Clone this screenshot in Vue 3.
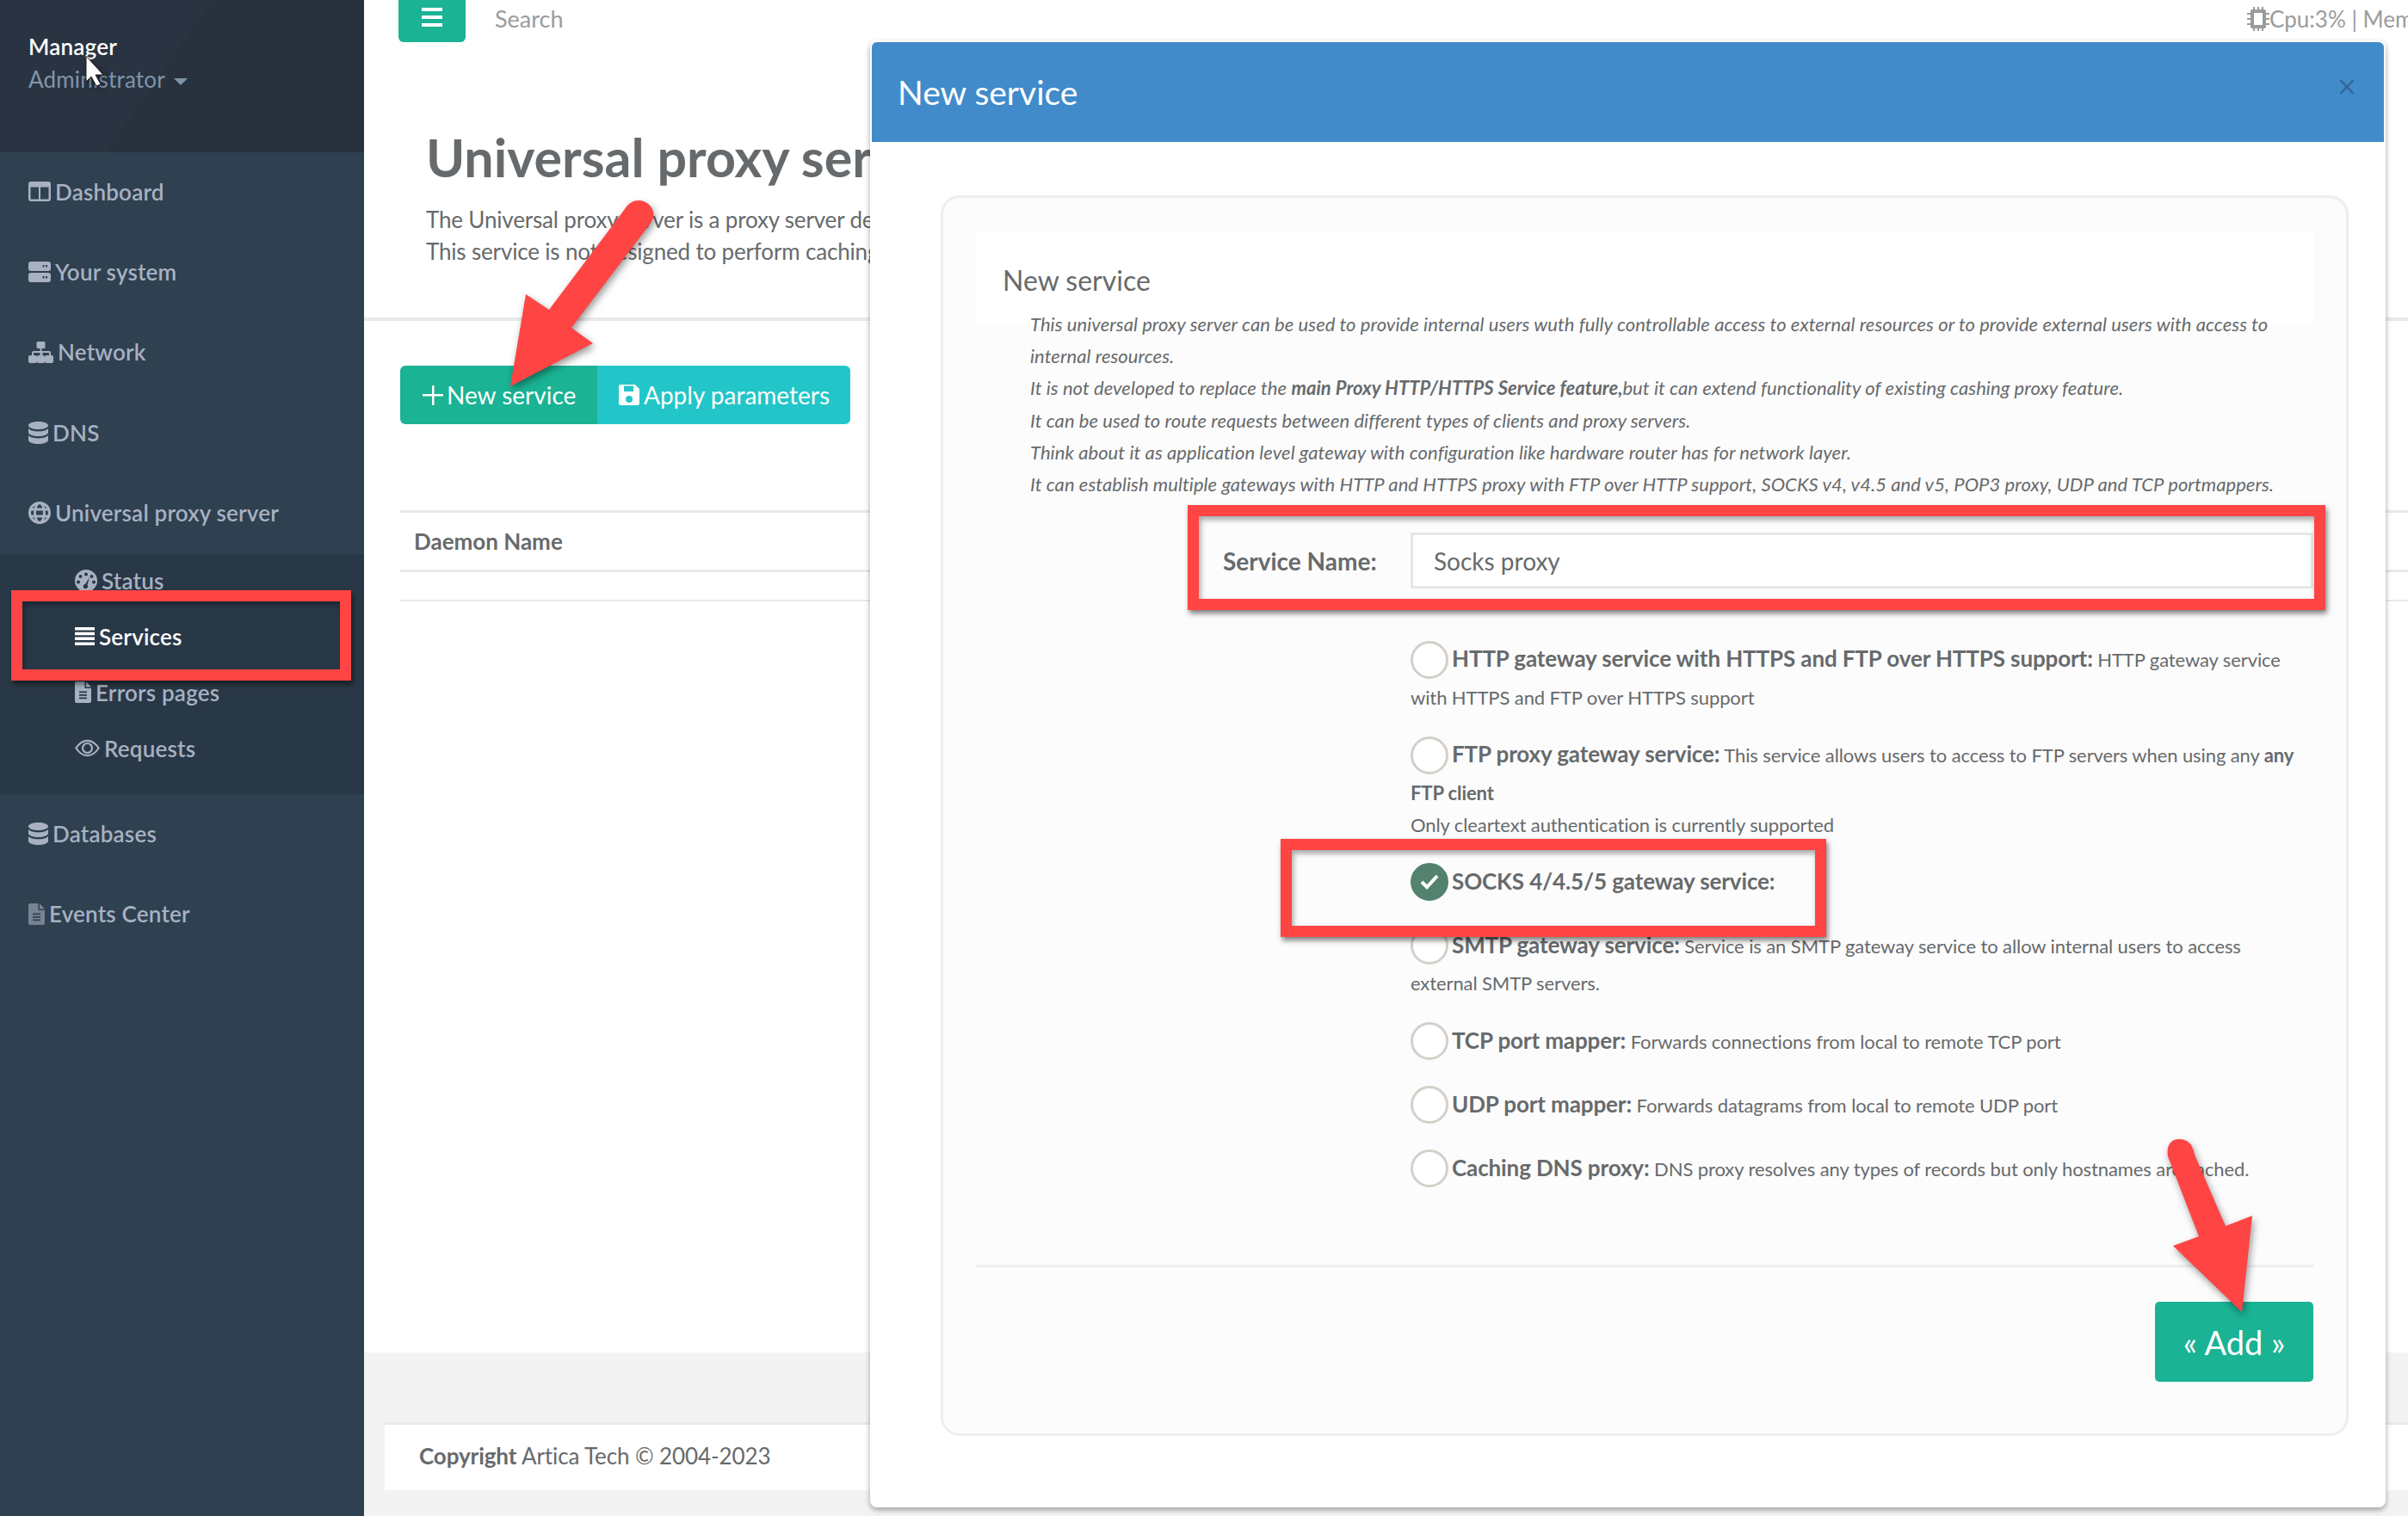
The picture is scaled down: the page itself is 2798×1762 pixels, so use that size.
<script setup>
const ICONS = {
  columns: { w: 26, h: 23, body: '<path fill-rule="evenodd" d="M3 0h20a3 3 0 0 1 3 3v17a3 3 0 0 1-3 3H3a3 3 0 0 1-3-3V3a3 3 0 0 1 3-3zM2.5 6.5v14h9.5v-14zM14 6.5v14h9.5v-14z"/>' },
  server: { w: 26, h: 24, body: '<path fill-rule="evenodd" d="M3 0h20a3 3 0 0 1 3 3v5a3 3 0 0 1-3 3H3a3 3 0 0 1-3-3V3a3 3 0 0 1 3-3zM20 4v2.500h2V4zM16.500 4v2.500h2V4zM3 13h20a3 3 0 0 1 3 3v5a3 3 0 0 1-3 3H3a3 3 0 0 1-3-3v-5a3 3 0 0 1 3-3zM20 17v2.500h2V17zM16.500 17v2.500h2V17z"/>' },
  sitemap: { w: 29, h: 25, body: '<path d="M11 0h7a1.500 1.500 0 0 1 1.500 1.500v5A1.500 1.500 0 0 1 18 8h-2.500v3H24a2 2 0 0 1 2 2v3h1a2 2 0 0 1 2 2v5a2 2 0 0 1-2 2h-6a2 2 0 0 1-2-2v-5a2 2 0 0 1 2-2h3v-3h-7.500v3H17a2 2 0 0 1 2 2v5a2 2 0 0 1-2 2h-5a2 2 0 0 1-2-2v-5a2 2 0 0 1 2-2h1.500v-3H6v3h2a2 2 0 0 1 2 2v5a2 2 0 0 1-2 2H2a2 2 0 0 1-2-2v-5a2 2 0 0 1 2-2h2v-3a2 2 0 0 1 2-2h7.500V8H11a1.500 1.500 0 0 1-1.500-1.500v-5A1.500 1.500 0 0 1 11 0z"/>' },
  database: { w: 23, h: 26, body: '<path d="M11.500 0C17.800 0 23 2 23 4.500S17.800 9 11.500 9 0 7 0 4.500 5.200 0 11.500 0zM0 8c2 2.400 7 3.400 11.500 3.400S21 10.400 23 8v4.500c0 2.500-5.200 4.500-11.500 4.500S0 15 0 12.500zM0 16c2 2.400 7 3.400 11.500 3.400S21 18.400 23 16v5.500c0 2.500-5.200 4.500-11.500 4.500S0 24 0 21.500z"/>' },
  globe: { w: 26, h: 26, body: '<g fill="none" stroke="currentColor" stroke-width="3"><circle cx="13" cy="13" r="11.500"/><ellipse cx="13" cy="13" rx="5.500" ry="11.500"/><path d="M1.500 9h23M1.500 17h23"/></g>' },
  gauge: { w: 26, h: 26, body: '<path fill-rule="evenodd" d="M13 0a13 13 0 1 1 0 26a13 13 0 0 1 0-26zM13 3.500a2 2 0 1 0 0 4a2 2 0 0 0 0-4zM6.500 6a2 2 0 1 0 0 4a2 2 0 0 0 0-4zM19.500 6a2 2 0 1 0 0 4a2 2 0 0 0 0-4zM4 12.500a2 2 0 1 0 0 4a2 2 0 0 0 0-4zM22 12.500a2 2 0 1 0 0 4a2 2 0 0 0 0-4zM17 9l-5 8a2.600 2.600 0 1 0 2.500 1z"/>' },
  bars: { w: 23, h: 21, body: '<path d="M0 0h23v3.500H0zM0 5.800h23v3.500H0zM0 11.600h23v3.500H0zM0 17.400h23v3.500H0z"/>' },
  file: { w: 19, h: 25, body: '<path fill-rule="evenodd" d="M2 0h9.500v8H19v15a2 2 0 0 1-2 2H2a2 2 0 0 1-2-2V2a2 2 0 0 1 2-2zM13 0l6 6.500h-6zM5 11.500v1.800h9v-1.800zM5 15v1.800h9V15zM5 18.500v1.800h9v-1.800z"/>' },
  eye: { w: 29, h: 21, body: '<g fill="none" stroke="currentColor" stroke-width="2.200"><path d="M1.300 10.500C5 5 9.500 1.800 14.500 1.800S24 5 27.700 10.500C24 16 19.500 19.200 14.500 19.200S5 16 1.300 10.500z"/><circle cx="14.500" cy="10.500" r="5.500"/></g>' },
}

const topItems = [
  { label: "Dashboard", icon: "columns" },
  { label: "Your system", icon: "server" },
  { label: "Network", icon: "sitemap" },
  { label: "DNS", icon: "database" },
  { label: "Universal proxy server", icon: "globe" },
]
const subItems = [
  { label: "Status", icon: "gauge" },
  { label: "Services", icon: "bars", active: true },
  { label: "Errors pages", icon: "file" },
  { label: "Requests", icon: "eye" },
]
const bottomItems = [
  { label: "Databases", icon: "database" },
  { label: "Events Center", icon: "file", dim: true },
]

const services = [
  { name: "HTTP gateway service with HTTPS and FTP over HTTPS support:", text: "HTTP gateway service with HTTPS and FTP over HTTPS support" },
  { name: "FTP proxy gateway service:", text: "This service allows users to access to FTP servers when using any", strong: "any FTP client", extra: "Only cleartext authentication is currently supported" },
  { name: "SOCKS 4/4.5/5 gateway service:", text: "", checked: true },
  { name: "SMTP gateway service:", text: "Service is an SMTP gateway service to allow internal users to access external SMTP servers." },
  { name: "TCP port mapper:", text: "Forwards connections from local to remote TCP port" },
  { name: "UDP port mapper:", text: "Forwards datagrams from local to remote UDP port" },
  { name: "Caching DNS proxy:", text: "DNS proxy resolves any types of records but only hostnames are cached." },
]
</script>

<template>
  <div class="page">
    <aside class="sidebar">
      <div class="profile">
        <div class="who">Manager</div>
        <div class="role">Administrator <span class="caret"></span></div>
      </div>
      <a v-for="item in topItems" :key="item.label" class="nav-item">
        <svg class="ico" :width="ICONS[item.icon].w" :height="ICONS[item.icon].h" :viewBox="`0 0 ${ICONS[item.icon].w} ${ICONS[item.icon].h}`" fill="currentColor" v-html="ICONS[item.icon].body"></svg>
        {{ item.label }}
      </a>
      <div class="submenu">
        <a v-for="item in subItems" :key="item.label" class="sub-item" :class="{ active: item.active }">
          <svg class="ico" :width="ICONS[item.icon].w" :height="ICONS[item.icon].h" :viewBox="`0 0 ${ICONS[item.icon].w} ${ICONS[item.icon].h}`" fill="currentColor" v-html="ICONS[item.icon].body"></svg>
          {{ item.label }}
        </a>
      </div>
      <a v-for="item in bottomItems" :key="item.label" class="nav-item" :class="{ dim: item.dim }">
        <svg class="ico" :width="ICONS[item.icon].w" :height="ICONS[item.icon].h" :viewBox="`0 0 ${ICONS[item.icon].w} ${ICONS[item.icon].h}`" fill="currentColor" v-html="ICONS[item.icon].body"></svg>
        <span>{{ item.label }}</span>
      </a>
    </aside>

    <main class="main">
      <div class="topbar">
        <button class="toggle">
          <svg width="24" height="22" viewBox="0 0 24 22" fill="#fff"><path d="M0 0h24v4H0zM0 9h24v4H0zM0 18h24v4H0z"/></svg>
        </button>
        <span class="search">Search</span>
        <span class="cpu">
          <svg class="chip" width="26" height="28" viewBox="0 0 26 28" fill="#999c9e"><path fill-rule="evenodd" d="M6 3h14a2 2 0 0 1 2 2v18a2 2 0 0 1-2 2H6a2 2 0 0 1-2-2V5a2 2 0 0 1 2-2zM8 7v14h10V7zM7 0h2v3H7zM12 0h2v3h-2zM17 0h2v3h-2zM7 25h2v3H7zM12 25h2v3h-2zM17 25h2v3h-2zM0 7h4v2H0zM0 13h4v2H0zM0 19h4v2H0zM22 7h4v2h-4zM22 13h4v2h-4zM22 19h4v2h-4z"/></svg>Cpu:3% | Mem
        </span>
      </div>

      <header class="heading">
        <h1>Universal proxy server</h1>
        <p>The Universal proxy server is a proxy server designed to route traffic between networks and to apply rules, filters and access control lists to every request that passes through it, including mapping and pir</p>
        <p>This service is not designed to perform caching, it only forwards the requests it receives to the selected backend</p>
      </header>

      <section class="content">
        <div class="btn-group">
          <button class="btn green">
            <svg width="24" height="24" viewBox="0 0 24 24" fill="#fff"><path d="M11 1h2.500v10H24v2.500H13.500V24H11V13.500H0V11h11z"/></svg>New service
          </button>
          <button class="btn cyan">
            <svg width="26" height="26" viewBox="0 0 26 26" fill="#fff"><path fill-rule="evenodd" d="M3 1h17l5 5v17a2 2 0 0 1-2 2H3a2 2 0 0 1-2-2V3a2 2 0 0 1 2-2zM7 2.500V9h11V2.500zM13 14a4 4 0 1 0 0 8a4 4 0 0 0 0-8z"/></svg>Apply parameters
          </button>
        </div>
        <div class="table-head">Daemon Name</div>
        <div class="table-empty"></div>
      </section>

      <div class="footer-zone">
        <footer class="footer"><strong>Copyright</strong> Artica Tech © 2004-2023</footer>
      </div>
    </main>

    <div class="modal">
      <div class="modal-head">
        <span class="modal-title">New service</span>
        <span class="close">×</span>
      </div>
      <div class="panel">
        <div class="intro">
          <h3>New service</h3>
          <div class="intro-text">
            This universal proxy server can be used to provide internal users wuth fully controllable access to external resources or to provide external users with access to internal resources.<br />
            It is not developed to replace the <strong>main Proxy HTTP/HTTPS Service feature,</strong>but it can extend functionality of existing cashing proxy feature.<br />
            It can be used to route requests between different types of clients and proxy servers.<br />
            Think about it as application level gateway with configuration like hardware router has for network layer.<br />
            It can establish multiple gateways with HTTP and HTTPS proxy with FTP over HTTP support, SOCKS v4, v4.5 and v5, POP3 proxy, UDP and TCP portmappers.
          </div>
        </div>
        <div class="name-row">
          <label>Service Name:</label>
          <input type="text" value="Socks proxy" />
        </div>
        <div class="options">
          <div v-for="s in services" :key="s.name" class="option">
            <span class="radio" :class="{ checked: s.checked }">
              <svg v-if="s.checked" width="24" height="20" viewBox="0 0 24 20"><path d="M3 10l6 6L21 3" fill="none" stroke="#fff" stroke-width="4"/></svg>
            </span>
            <strong class="opt-name">{{ s.name }}</strong>
            {{ s.text }}
            <strong v-if="s.strong" class="opt-strong">{{ s.strong }}</strong>
            <template v-if="s.extra"><br />{{ s.extra }}</template>
          </div>
        </div>
        <div class="panel-foot">
          <button class="add">« Add »</button>
        </div>
      </div>
    </div>

    <div class="mark mark-services"></div>
    <div class="mark mark-name"></div>
    <div class="mark mark-socks"></div>

    <svg class="arrows" width="2798" height="1762" viewBox="0 0 2798 1762">
      <path fill="#ff4444" d="M593 449L611 342L638 360L726 243C732 233 742 231 750 235C759 240 762 249 757 258L664 381L689 399z" />
      <path fill="#ff4444" d="M2605 1525L2525 1448L2555 1437L2519 1344C2517 1332 2522 1324 2532 1324C2542 1324 2548 1330 2550 1342L2586 1425L2617 1413z" />
      <path fill="#fff" stroke="#222" stroke-width="1" d="M100 65v30l6-6 6 11 5-2-6-11h9z" />
    </svg>
  </div>
</template>

<style scoped>
.page {
  position: relative;
  display: flex;
  width: 2798px;
  height: 1762px;
  overflow: hidden;
  background: #fff;
  font-family: Lato, "Open Sans", sans-serif;
  font-size: 26px;
  color: #676a6c;
}

.sidebar {
  width: 423px;
  flex-shrink: 0;
  background: #2f4050;
  color: #a7b1c2;
  font-weight: 600;
  letter-spacing: 0.2px;
}

.profile {
  height: 177px;
  box-sizing: border-box;
  padding-top: 35px;
  padding-left: 33px;
  background: linear-gradient(125deg, #2a3342 0 45%, #28323f 45% 100%);
}
.who {
  color: #fff;
  line-height: 38px;
}
.role {
  font-weight: 400;
  color: #8095a8;
  line-height: 38px;
  letter-spacing: 0.2px;
}
.caret {
  display: inline-block;
  margin-left: 4px;
  vertical-align: middle;
  border-left: 8px solid transparent;
  border-right: 8px solid transparent;
  border-top: 8px solid #8095a8;
}

.nav-item {
  display: flex;
  align-items: center;
  gap: 5px;
  height: 93.4px;
  box-sizing: border-box;
  padding: 0 0 2px 33px;
}
.nav-item.dim .ico {
  opacity: 0.6;
}

.submenu {
  background: #293846;
  padding-bottom: 19px;
}
.sub-item {
  display: flex;
  align-items: center;
  gap: 5px;
  height: 65px;
  box-sizing: border-box;
  padding: 0 0 3px 87px;
}
.sub-item.active {
  color: #fff;
}

.main {
  flex: 1;
  min-width: 0;
  display: flex;
  flex-direction: column;
  overflow: hidden;
}

.topbar {
  display: flex;
  height: 49px;
  flex-shrink: 0;
}
.toggle {
  width: 78px;
  height: 49px;
  margin-left: 40px;
  border: none;
  border-radius: 0 0 6px 6px;
  background: #1ab394;
  padding: 0 0 6px;
}
.search {
  margin-left: 34px;
  flex: 1;
  line-height: 43px;
  color: #999c9e;
  font-size: 27px;
}
.cpu {
  display: flex;
  align-items: center;
  width: 187px;
  height: 43px;
  overflow: hidden;
  white-space: nowrap;
  color: #999c9e;
}
.chip {
  flex-shrink: 0;
}

.heading {
  height: 324px;
  flex-shrink: 0;
  box-sizing: border-box;
  padding: 102px 0 0 72px;
  border-bottom: 4px solid #e7eaec;
}
.heading h1 {
  margin: 0 0 22px;
  font-size: 61px;
  line-height: 64px;
  font-weight: 700;
  white-space: nowrap;
}
.heading p {
  margin: 0;
  line-height: 37px;
  white-space: nowrap;
  letter-spacing: -0.17px;
}

.content {
  flex: 1;
  padding: 52px 0 0 42px;
}
.btn-group {
  display: flex;
}
.btn {
  display: flex;
  align-items: center;
  gap: 4px;
  height: 68px;
  border: none;
  color: #fff;
  font-family: inherit;
  font-size: 28px;
}
.btn.green {
  width: 229px;
  padding-left: 26px;
  background: #1ab394;
  border-radius: 6px 0 0 6px;
}
.btn.cyan {
  width: 294px;
  padding-left: 24px;
  background: #23c6c8;
  border-radius: 0 6px 6px 0;
}
.table-head {
  margin-top: 100px;
  height: 66px;
  padding-left: 16px;
  line-height: 66px;
  font-weight: 700;
  border-top: 3px solid #e7eaec;
  border-bottom: 3px solid #e7eaec;
}
.table-empty {
  height: 32px;
  border-bottom: 2px solid #e7eaec;
}

.footer-zone {
  flex-shrink: 0;
  height: 190px;
  box-sizing: border-box;
  padding: 81px 0 30px 24px;
  background: #f3f3f4;
}
.footer {
  height: 79px;
  box-sizing: border-box;
  padding-left: 40px;
  line-height: 72px;
  background: #fff;
  border-top: 3px solid #e7eaec;
  font-size: 26px;
  letter-spacing: -0.1px;
}

.modal {
  position: absolute;
  left: 1011px;
  top: 47px;
  width: 1761px;
  height: 1705px;
  box-sizing: border-box;
  padding: 2px;
  background: #fff;
  border-radius: 8px;
  box-shadow: 0 3px 6px rgba(0, 0, 0, 0.35);
}
.modal-head {
  display: flex;
  justify-content: space-between;
  height: 116px;
  padding: 0 32px 0 30px;
  background: #428bca;
  border-radius: 6px 6px 0 0;
  color: #fff;
}
.modal-title {
  font-size: 39px;
  line-height: 116px;
}
.close {
  font-size: 38px;
  line-height: 100px;
  color: #34689a;
}

.panel {
  margin: 62px 41px 0 80px;
  height: 1442px;
  box-sizing: border-box;
  padding: 38px 38px 0 38px;
  background: #fcfcfc;
  border: 3px solid #eeeeee;
  border-radius: 22px;
}
.intro {
  background: linear-gradient(#fff 111px, transparent 111px);
  padding-top: 38px;
}
.intro h3 {
  margin: 0 0 12px 31px;
  font-size: 32px;
  line-height: 40px;
  font-weight: 400;
}
.intro-text {
  margin-left: 63px;
  margin-right: 38px;
  font-size: 22px;
  line-height: 37.2px;
  font-style: italic;
  letter-spacing: 0.06px;
}
.name-row {
  display: flex;
  align-items: center;
  margin-top: 38px;
}
.name-row label {
  width: 505px;
  box-sizing: border-box;
  padding-left: 287px;
  font-size: 28px;
  font-weight: 700;
  white-space: nowrap;
}
.name-row input {
  flex: 1;
  height: 65px;
  box-sizing: border-box;
  padding: 0 24px;
  border: 3px solid #e5e6e7;
  background: #fff;
  font-family: inherit;
  font-size: 28px;
  color: #676a6c;
}
.options {
  margin-top: 63px;
  margin-left: 505px;
  padding-right: 14px;
  font-size: 22px;
  letter-spacing: -0.1px;
  line-height: 37px;
}
.option {
  margin-bottom: 29.5px;
}
.radio {
  display: inline-flex;
  align-items: center;
  justify-content: center;
  width: 44px;
  height: 44px;
  box-sizing: border-box;
  margin: -3px 4px 3px 0;
  vertical-align: middle;
  border: 3px solid #d3d0c9;
  border-radius: 50%;
  background: #fff;
}
.radio.checked {
  border-color: #53826f;
  background: #53826f;
}
.opt-name {
  font-size: 26px;
  letter-spacing: -0.12px;
}
.opt-strong {
  font-weight: 700;
}
.panel-foot {
  margin-top: 87px;
  border-top: 3px solid #eeeeee;
  padding-top: 40px;
  display: flex;
  justify-content: flex-end;
}
.add {
  width: 184px;
  height: 93px;
  border: none;
  border-radius: 5px;
  background: #1ab394;
  color: #fff;
  font-family: inherit;
  font-size: 38px;
}

.mark {
  position: absolute;
  box-sizing: border-box;
  border: 13px solid #ff4444;
  box-shadow: 2px 4px 6px rgba(0, 0, 0, 0.5), inset 2px 4px 6px rgba(0, 0, 0, 0.35);
}
.mark-services {
  left: 13px;
  top: 686px;
  width: 395px;
  height: 105px;
}
.mark-name {
  left: 1380px;
  top: 587px;
  width: 1322px;
  height: 122px;
}
.mark-socks {
  left: 1488px;
  top: 975px;
  width: 634px;
  height: 114px;
}

.arrows {
  position: absolute;
  left: 0;
  top: 0;
  filter: drop-shadow(2px 4px 4px rgba(0, 0, 0, 0.4));
  pointer-events: none;
}
</style>
